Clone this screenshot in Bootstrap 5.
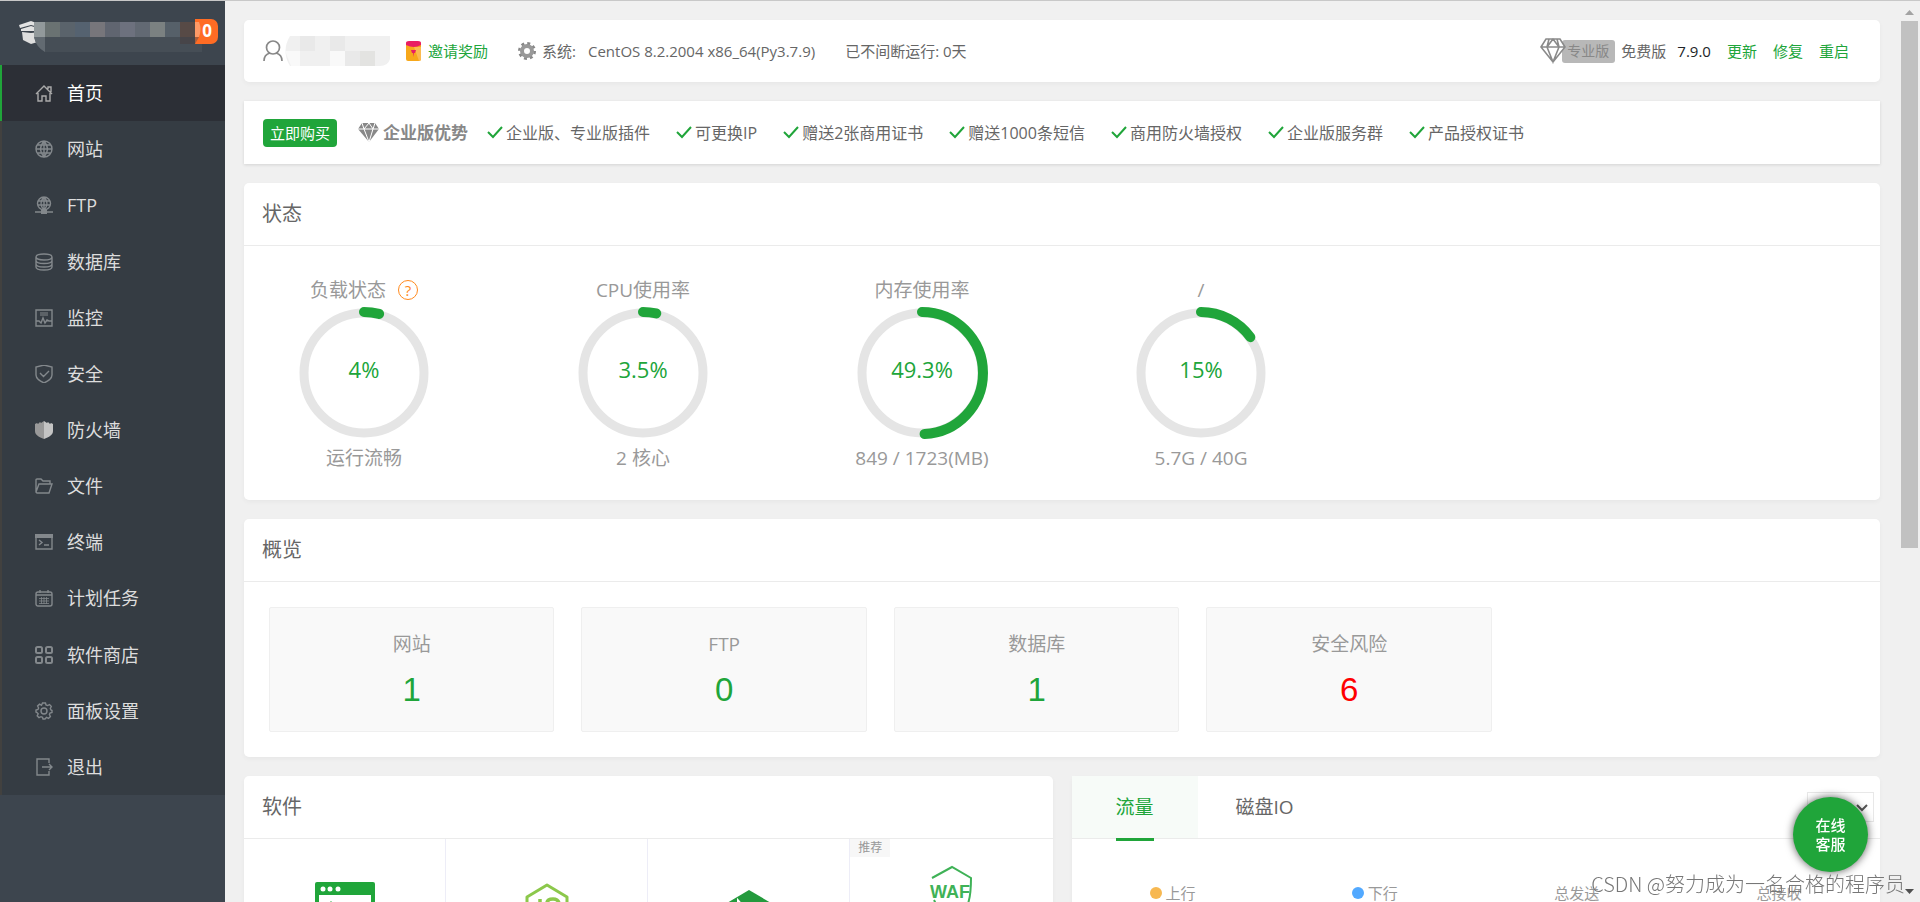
<!DOCTYPE html>
<html lang="zh-CN">
<head>
<meta charset="utf-8">
<meta name="viewport" content="width=device-width, initial-scale=1">
<title>服务器面板</title>
<link rel="stylesheet" href="https://cdn.jsdelivr.net/npm/bootstrap@5.3.0/dist/css/bootstrap.min.css">
<script src="https://cdn.jsdelivr.net/npm/bootstrap@5.3.0/dist/js/bootstrap.bundle.min.js"></script>
<style>
:root{--brand:#20a53a;--ink:#666;--soft:#999}
body{height:100vh;overflow:hidden;background:#f0f0f0;color:var(--ink);border-top:1px solid #c8c8c8;
 font-family:"Open Sans","Noto Sans CJK SC",sans-serif;font-weight:400;font-size:15px;line-height:20px}
button,select{font:inherit}
a{color:var(--brand);text-decoration:none}
ul{list-style:none;margin:0;padding:0}
.sidebar{width:225px;background:#3d454e}
.side-head{height:64px;padding:18px 6px 0 18px}
.side-menu{min-height:730px;background:#353c43}
.side-menu a{padding-left:33px;gap:14px;border-left:2px solid #42413f;color:#ddd;font-size:18px;line-height:24px}
.side-menu a svg{width:18px;height:18px;color:#83888c}
.side-menu a.active{background:#2c2f36;border-color:var(--brand);color:#fff}
.side-menu a.active svg{color:#aaa}
svg{flex:none}
.line{fill:none;stroke:currentColor;stroke-width:1.4}
.msg-badge{width:38px;height:25px;margin-left:-22px;padding-right:6px;background:#ff6c24;border-radius:7px;color:#fff;font-weight:700;font-size:17px;line-height:24px;font-family:"Noto Sans",sans-serif}
.page{padding:19px 21px 0 19px;gap:19px}
.page>*{flex-shrink:0}
.panel{background:#fff;border-radius:5px;box-shadow:0 2px 5px rgba(0,0,0,.04)}
.info-bar{height:62px;padding:0 31px 0 19px}
.promo{height:63px;padding:0 19px;gap:25px;font-size:16px;border-radius:0;box-shadow:0 1px 3px rgba(0,0,0,.12)}
.promo ul{gap:26px}
.promo li{gap:3px}
.buy{height:28px;padding:0 7px;background:var(--brand);color:#fff;font-size:15px;line-height:26px;border:0;border-radius:4px}
.pro-pill{height:23px;width:53px;margin-left:-4px;background:#b8b8b8;color:#888;font-size:14px;border-radius:3px;line-height:22px;padding-left:5px}
.panel-title{height:63px;padding:0 18px;border-bottom:1px solid #ebebeb;font-size:20px;line-height:24px;font-weight:400;margin:0}
.gauges{padding:30px 20px 28px;gap:79px;color:var(--soft);font-size:19px;line-height:28px}
.gauge{width:200px}
.gauge svg{width:132px;height:132px;margin:3px 0 5px}
.gauge text{font-size:22px;font-weight:400;fill:var(--brand);text-anchor:middle}
.help{width:20px;height:20px;border:1px solid #ff8a1e;border-radius:50%;color:#ff8a1e;font-size:15px;font-weight:400;line-height:18px}
.totals{padding:25px;display:grid;grid-template-columns:repeat(4,18%);gap:27px}
.total{height:125px;padding-top:22px;background:#f9f9f9;border:1px solid #efefef;border-radius:2px;color:var(--soft);font-size:19px;line-height:28px}
.total a{font-family:"Liberation Sans",sans-serif;font-size:33px;line-height:36px;font-weight:400;margin-top:14px}
.halves{display:grid;grid-template-columns:1fr 1fr;gap:19px}
.apps,.stats{display:grid;grid-template-columns:repeat(4,1fr)}
.app-cell{height:160px;border-right:1px solid #ededf7}
.app-cell:last-child{border:0}
.hint{background:#f7f7f7;color:var(--soft);font-size:12px;line-height:18px;width:40px}
.tab{border:0;background:none;color:var(--ink);font-size:19px;padding:0 38px}
.tab.active{background:#f7fbf8;color:var(--brand);padding:0 44px}
.tab.active span{height:65px;line-height:62px;margin-bottom:-2px;border-bottom:3px solid var(--brand)}
.unit{width:67px;height:30px;border:1px solid #e8e8e8;background:#fff;border-radius:0;margin-right:6px;padding:0;appearance:none}
.unit-arrow{right:12px;top:28px;pointer-events:none}
.stats{padding-top:44px;color:var(--soft)}
.dot{width:12px;height:12px;border-radius:50%}
.service{right:52px;bottom:30px;width:75px;height:75px;border:0;border-radius:50%;background:var(--brand);color:#fff;font-weight:500;line-height:19px;box-shadow:0 0 8px rgba(0,0,0,.65);z-index:3}
.credit{right:15px;bottom:4px;font:300 20px/28px "Noto Sans CJK SC",sans-serif;color:#777;z-index:4}
.scroll{width:19px;padding:8px 2px 7px 0}
.thumb{width:17px;height:527px;background:#c1c1c1;margin-top:6px}
</style>
</head>
<body class="d-flex">
<aside class="sidebar flex-shrink-0">
 <div class="side-head d-flex">
  <svg width="184" height="36" viewBox="0 0 184 36">
   <path d="M1 6 13 2l11 4v3L13 6 2 9zM3 10l10-3 10 3v2H3z" fill="#e2e2e2"/><path d="M4 13l9 1 10-1v9l-10 3-8-4z" fill="#dedede"/>
   <path d="M16 3h168v30H27Q16 27 16 14z" fill="#464e56"/>
   <path d="M16 3h11v15H16z" fill="#92999b"/><path d="M27 3h15v15H27z" fill="#6a7272"/><path d="M42 3h15v15H42z" fill="#5a636b"/><path d="M57 3h15v15H57z" fill="#556270"/><path d="M72 3h15v15H72z" fill="#77767b"/><path d="M87 3h15v15H87z" fill="#606570"/><path d="M102 3h15v15h-15z" fill="#6d717e"/><path d="M117 3h15v15h-15z" fill="#626973"/><path d="M132 3h15v15h-15z" fill="#7b8181"/><path d="M147 3h15v15h-15z" fill="#566069"/>
   <path d="M16 18h11v15q-9-5-11-15z" fill="#626a71"/>
  </svg>
  <a href="#" class="msg-badge d-block text-end position-relative" style="z-index:0">0
   <svg class="position-absolute top-0 start-0" width="22" height="25" viewBox="0 0 22 25"><path d="M0 0h15v25H0z" fill="#3d454e"/><path d="M0 3h15v15H0z" fill="#574a46"/><path d="M15 3h4q3 7 0 15h-4z" fill="#ff9a66"/><path d="M0 18h15v7H0z" fill="#474549"/><path d="M15 18h4l-4 7z" fill="#a85e3d"/></svg></a>
 </div>
 <ul class="side-menu d-flex flex-column">
  <li class="flex-fill d-flex"><a href="#" class="active flex-fill d-flex align-items-center"><svg viewBox="0 0 18 18"><path class="line" d="M1 10 9 2l8 8M13 5V3h3v5M3 9v8h4v-5h4v5h4V9"/></svg>首页</a></li>
  <li class="flex-fill d-flex"><a href="#" class="flex-fill d-flex align-items-center"><svg viewBox="0 0 18 18"><path class="line" d="M9 1a8 8 0 1 0 0 16A8 8 0 0 0 9 1q-7 8 0 16 7-8 0-16zv16M1 9h16M2.500 5h13M2.500 13h13"/></svg>网站</a></li>
  <li class="flex-fill d-flex"><a href="#" class="flex-fill d-flex align-items-center"><svg viewBox="0 0 18 18"><path class="line" d="M9 1a6.500 6.500 0 1 0 0 13A6.500 6.500 0 0 0 9 1q-6 6.500 0 13 6-6.500 0-13zv13M3 5h12M2.500 9h13M0 16h18"/><path fill="currentColor" d="M6 14h6v4H6z"/></svg>FTP</a></li>
  <li class="flex-fill d-flex"><a href="#" class="flex-fill d-flex align-items-center"><svg viewBox="0 0 18 18"><path class="line" d="M1 4c0-4 16-4 16 0s-16 4-16 0v10c0 4 16 4 16 0V4M1 7.500c0 4 16 4 16 0M1 11c0 4 16 4 16 0"/></svg>数据库</a></li>
  <li class="flex-fill d-flex"><a href="#" class="flex-fill d-flex align-items-center"><svg viewBox="0 0 18 18"><path class="line" d="M1 1h16v16H1zM1 12h3l2 2 2-5 2 5 2-3 2 1h3" stroke-width="1.200"/><path fill="currentColor" opacity=".5" d="M5 3h8v4H5z"/></svg>监控</a></li>
  <li class="flex-fill d-flex"><a href="#" class="flex-fill d-flex align-items-center"><svg viewBox="0 0 18 18"><path class="line" d="m9 0 8 2v8c0 4-4 6-8 8-4-2-8-4-8-8V2zM5 8l3.500 3.500L14 6" stroke-width="1.600"/></svg>安全</a></li>
  <li class="flex-fill d-flex"><a href="#" class="flex-fill d-flex align-items-center"><svg viewBox="0 0 18 18"><path fill="#999" d="M9 0v18C4 16 0 14 0 10V3l2-1 1 1 2-2 1 1z"/><path fill="#c4c4c4" d="M9 0v18c5-2 9-4 9-8V3l-2-1-1 1-2-2-1 1z"/></svg>防火墙</a></li>
  <li class="flex-fill d-flex"><a href="#" class="flex-fill d-flex align-items-center"><svg viewBox="0 0 18 18"><path class="line" d="M1 15V3q0-1 1-1h4l2 2h7v3M1 15 4 7h13l-3 9H2z" stroke-width="1.200"/></svg>文件</a></li>
  <li class="flex-fill d-flex"><a href="#" class="flex-fill d-flex align-items-center"><svg viewBox="0 0 18 18"><path class="line" d="M1 2h16v14H1zM4 7l3 2.500L4 12M9 12h5"/><path fill="currentColor" d="M0 1h18v4H0z"/></svg>终端</a></li>
  <li class="flex-fill d-flex"><a href="#" class="flex-fill d-flex align-items-center"><svg viewBox="0 0 18 18"><rect class="line" x="1" y="3" width="16" height="14" rx="2"/><path class="line" d="M1 6h16M5 1v3M13 1v3" /><path d="M4 9.500h10M4 12h10M4 14.500h10M6.500 8v7M9 8v7M11.500 8v7" fill="none" stroke="currentColor" stroke-width=".8"/></svg>计划任务</a></li>
  <li class="flex-fill d-flex"><a href="#" class="flex-fill d-flex align-items-center"><svg viewBox="0 0 18 18"><g fill="none" stroke="currentColor" stroke-width="2"><rect x="1" y="1" width="6" height="6" rx="1.500"/><rect x="11" y="1" width="6" height="6" rx="1.500"/><rect x="1" y="11" width="6" height="6" rx="1.500"/><rect x="11" y="11" width="6" height="6" rx="1.500"/></g></svg>软件商店</a></li>
  <li class="flex-fill d-flex"><a href="#" class="flex-fill d-flex align-items-center"><svg viewBox="0 0 18 18"><circle class="line" cx="9" cy="9" r="3"/><path class="line" d="M7.500 1h3l.5 2 1.500.6 2-1 1.800 1.900-1 2L16 8l1 .5v2l-2 .5-.6 1.500 1 2-1.900 1.800-2-1L10 17H8l-.5-1.700-1.500-.6-2 1-1.800-1.900 1-2L2 10.500l-1-.5V8l2-.5L3.600 6l-1-2 1.900-1.800 2 1z" stroke-width="1.200"/></svg>面板设置</a></li>
  <li class="flex-fill d-flex"><a href="#" class="flex-fill d-flex align-items-center"><svg viewBox="0 0 18 18"><path class="line" d="M14 5V1H2v16h12v-4M7 9h10M14 6l3 3-3 3"/></svg>退出</a></li>
 </ul>
</aside>

<main class="page flex-fill d-flex flex-column">
 <section class="panel info-bar d-flex align-items-center">
  <svg width="20" height="22" viewBox="0 0 20 22"><path d="M10 1a6 6 0 0 1 0 13A6 6 0 0 1 10 1zM1 21c0-4 2-7 6-8M19 21c0-4-2-7-6-8" fill="none" stroke="#888" stroke-width="1.700"/></svg>
  <svg width="107" height="30" viewBox="0 0 107 30"><path d="M7 0h100v23q-2 7-10 7H7Q-2 15 7 0z" fill="#f0f0f0"/><path d="M17 0h15v15H17zM47 0h15v15H47zM62 15h15v15H62z" fill="#e9e9e9"/><path d="M77 15h15v15H77z" fill="#e3e3e1"/><path d="M47 15h15v15H47zM2 15h15v15H8z" fill="#f9f9f9"/></svg>
  <svg class="ms-3" width="15" height="20" viewBox="0 0 15 20"><rect y="1" width="15" height="19" rx="2" fill="#f7a81b"/><path d="M8 6h7v12q0 2-2 2z" fill="#fbbb50"/><path d="M0 4V2q0-2 3-2h9q3 0 3 2v2q-7 4-15 0z" fill="#e91e63"/><path d="M5 9h5l-1 3H8l-.5 4L7 12H6z" fill="#e91e63"/></svg>
  <a href="#" style="margin-left:7px">邀请奖励</a>
  <svg style="margin-left:30px" width="18" height="18" viewBox="0 0 18 18"><circle cx="9" cy="9" r="5" fill="none" stroke="#999" stroke-width="4"/><circle cx="9" cy="9" r="7.800" fill="none" stroke="#888" stroke-width="2.400" stroke-dasharray="3 3.130"/></svg>
  <span style="margin-left:6px">系统:</span><span style="margin-left:12px">CentOS 8.2.2004 x86_64(Py3.7.9)</span>
  <span style="margin-left:30px">已不间断运行: 0天</span>
  <svg class="ms-auto position-relative" style="z-index:1" width="26" height="26" viewBox="0 0 26 26"><path d="M6 1h14l5 8-12 15L1 9zM1 9h24M9 1 7 9l6 15 6-15-2-8M7 9l6-8 6 8" fill="#fff" stroke="#8a8a8a" stroke-width="1.600"/></svg>
  <span class="pro-pill">专业版</span><span style="margin-left:6px">免费版</span>
  <span class="text-dark" style="margin-left:11px">7.9.0</span>
  <a href="#" class="ms-3">更新</a><a href="#" class="ms-3">修复</a><a href="#" class="ms-3">重启</a>
 </section>

 <section class="panel promo d-flex align-items-center">
  <button class="buy" type="button">立即购买</button>
  <strong class="d-flex align-items-center" style="gap:4px;font-size:17px;color:#888;margin-left:-4px"><svg width="21" height="19" viewBox="0 0 21 19"><path d="M4 0h13l4 6-10 13L0 6z" fill="#888"/><path d="M0 6h21M6 6l5 13 4-13M4 0l2 6 5-6 4 6 2-6" fill="none" stroke="#fff" stroke-width="1"/></svg>企业版优势</strong>
  <ul class="d-flex align-items-center" style="margin-left:-6px">
   <li class="d-flex align-items-center"><svg width="16" height="13" viewBox="0 0 16 13"><path d="m1 6 5 5L15 1" fill="none" stroke="#20a53a" stroke-width="2"/></svg>企业版、专业版插件</li>
   <li class="d-flex align-items-center"><svg width="16" height="13" viewBox="0 0 16 13"><path d="m1 6 5 5L15 1" fill="none" stroke="#20a53a" stroke-width="2"/></svg>可更换IP</li>
   <li class="d-flex align-items-center"><svg width="16" height="13" viewBox="0 0 16 13"><path d="m1 6 5 5L15 1" fill="none" stroke="#20a53a" stroke-width="2"/></svg>赠送2张商用证书</li>
   <li class="d-flex align-items-center"><svg width="16" height="13" viewBox="0 0 16 13"><path d="m1 6 5 5L15 1" fill="none" stroke="#20a53a" stroke-width="2"/></svg>赠送1000条短信</li>
   <li class="d-flex align-items-center"><svg width="16" height="13" viewBox="0 0 16 13"><path d="m1 6 5 5L15 1" fill="none" stroke="#20a53a" stroke-width="2"/></svg>商用防火墙授权</li>
   <li class="d-flex align-items-center"><svg width="16" height="13" viewBox="0 0 16 13"><path d="m1 6 5 5L15 1" fill="none" stroke="#20a53a" stroke-width="2"/></svg>企业版服务群</li>
   <li class="d-flex align-items-center"><svg width="16" height="13" viewBox="0 0 16 13"><path d="m1 6 5 5L15 1" fill="none" stroke="#20a53a" stroke-width="2"/></svg>产品授权证书</li>
  </ul>
 </section>

 <section class="panel">
  <h2 class="panel-title d-flex align-items-center">状态</h2>
  <div class="gauges d-flex text-center">
   <div class="gauge"><div class="d-flex justify-content-center align-items-center" style="gap:12px">负载状态<a href="#" class="help">?</a></div>
    <svg viewBox="0 0 132 132"><circle cx="66" cy="66" r="60" fill="none" stroke="#e5e5e5" stroke-width="9"/><path d="M66 5a61 61 0 0 1 0 122a61 61 0 0 1 0-122" pathLength="100" fill="none" stroke="#20a53a" stroke-width="10" stroke-linecap="round" stroke-dasharray="4 100"/><text x="66" y="71">4%</text></svg><div>运行流畅</div></div>
   <div class="gauge"><div>CPU使用率</div>
    <svg viewBox="0 0 132 132"><circle cx="66" cy="66" r="60" fill="none" stroke="#e5e5e5" stroke-width="9"/><path d="M66 5a61 61 0 0 1 0 122a61 61 0 0 1 0-122" pathLength="100" fill="none" stroke="#20a53a" stroke-width="10" stroke-linecap="round" stroke-dasharray="3.500 100"/><text x="66" y="71">3.5%</text></svg><div>2 核心</div></div>
   <div class="gauge"><div>内存使用率</div>
    <svg viewBox="0 0 132 132"><circle cx="66" cy="66" r="60" fill="none" stroke="#e5e5e5" stroke-width="9"/><path d="M66 5a61 61 0 0 1 0 122a61 61 0 0 1 0-122" pathLength="100" fill="none" stroke="#20a53a" stroke-width="10" stroke-linecap="round" stroke-dasharray="49.300 100"/><text x="66" y="71">49.3%</text></svg><div>849 / 1723(MB)</div></div>
   <div class="gauge"><div>/</div>
    <svg viewBox="0 0 132 132"><circle cx="66" cy="66" r="60" fill="none" stroke="#e5e5e5" stroke-width="9"/><path d="M66 5a61 61 0 0 1 0 122a61 61 0 0 1 0-122" pathLength="100" fill="none" stroke="#20a53a" stroke-width="10" stroke-linecap="round" stroke-dasharray="15 100"/><text x="66" y="71">15%</text></svg><div>5.7G / 40G</div></div>
  </div>
 </section>

 <section class="panel">
  <h2 class="panel-title d-flex align-items-center">概览</h2>
  <div class="totals text-center">
   <div class="total">网站<a href="#" class="d-block">1</a></div>
   <div class="total">FTP<a href="#" class="d-block">0</a></div>
   <div class="total">数据库<a href="#" class="d-block">1</a></div>
   <div class="total">安全风险<a href="#" class="d-block" style="color:#f00">6</a></div>
  </div>
 </section>

 <div class="halves">
  <section class="panel">
   <h2 class="panel-title d-flex align-items-center">软件</h2>
   <div class="apps text-center">
    <div class="app-cell"><svg style="margin-top:43px" width="60" height="60" viewBox="0 0 60 60"><rect width="60" height="60" rx="2" fill="#20a53a"/><path d="M4 13h52v43H4z" fill="#fff"/><circle cx="8" cy="7" r="2.500" fill="#fff"/><circle cx="15" cy="7" r="2.500" fill="#fff"/><circle cx="23" cy="7" r="2.500" fill="#fff"/><path d="m9 27 7-8 7 8-7 20z" fill="#20a53a"/></svg></div>
    <div class="app-cell"><svg style="margin-top:44px" width="44" height="50" viewBox="0 0 44 50"><path d="m22 2 20 12v22L22 48 2 36V14z" fill="none" stroke="#8cc84b" stroke-width="3" stroke-linejoin="round"/><path d="M15 16v16q0 4-5 3M34 20q-1-4-6-4-6 0-6 4 0 4 6 5t6 5q0 4-6 4-6 0-7-4" fill="none" stroke="#8cc84b" stroke-width="3.500"/></svg></div>
    <div class="app-cell"><svg style="margin-top:51px" width="44" height="50" viewBox="0 0 44 50"><path d="m22 0 22 13v24L22 50 0 37V13z" fill="#249a3d"/><path d="M12 36V13l20 22V12" fill="none" stroke="#fff" stroke-width="4"/></svg></div>
    <div class="app-cell d-flex flex-column"><span class="hint">推荐</span><svg class="mx-auto" style="margin-top:8px" width="44" height="54" viewBox="0 0 44 54"><path d="M3 13 23 2l19 11q0 22-5 30L23 52 9 43 5 35" fill="none" stroke="#3fb257" stroke-width="2"/><path d="M0 18h38v16H0z" fill="#fff"/><text x="1" y="33" font-size="18" font-weight="700" font-family="Liberation Sans" fill="#3fb257">WAF</text></svg></div>
   </div>
  </section>
  <section class="panel">
   <div class="panel-title d-flex align-items-center p-0 position-relative">
    <button type="button" class="tab active align-self-stretch d-flex"><span class="d-block">流量</span></button>
    <button type="button" class="tab">磁盘IO</button>
    <select class="unit ms-auto" aria-label="网卡"><option></option></select>
    <svg class="unit-arrow position-absolute" width="12" height="9" viewBox="0 0 12 9"><path d="m1 1 5 5 5-5" fill="none" stroke="#555" stroke-width="2"/></svg>
   </div>
   <div class="stats">
    <div class="d-flex justify-content-center align-items-center gap-1"><span class="dot" style="background:#f7b851"></span>上行</div>
    <div class="d-flex justify-content-center align-items-center gap-1"><span class="dot" style="background:#52a9ff"></span>下行</div>
    <div class="text-center">总发送</div>
    <div class="text-center">总接收</div>
   </div>
  </section>
 </div>
</main>

<div class="scroll flex-shrink-0 d-flex flex-column align-items-center" aria-hidden="true">
 <svg width="9" height="6" viewBox="0 0 9 6"><path d="m0 6 4.500-5L9 6z" fill="#a3a3a3"/></svg>
 <div class="thumb"></div>
 <svg class="mt-auto" width="9" height="6" viewBox="0 0 9 6"><path d="m0 0 4.500 5L9 0z" fill="#505050"/></svg>
</div>
<button type="button" class="service position-fixed">在线<br>客服</button>
<div class="credit position-fixed">CSDN @努力成为一名合格的程序员</div>
</body>
</html>
